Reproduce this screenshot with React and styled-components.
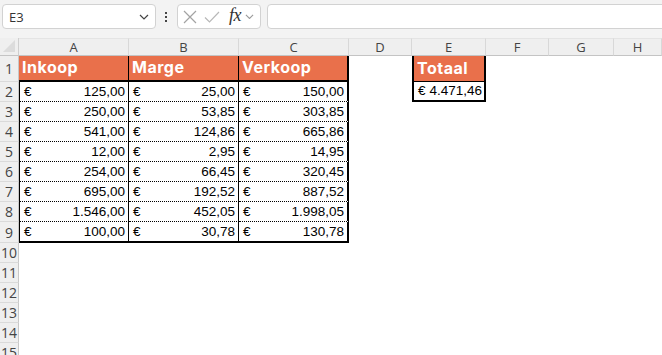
import React from 'react'
import styled, { createGlobalStyle } from 'styled-components'

const Global = createGlobalStyle`
  html, body { margin: 0; padding: 0; background: #fff; }
  body { font-family: "Liberation Sans", Arial, sans-serif; overflow: hidden; }
`

const Page = styled.div`
  width: 662px;
  height: 355px;
  overflow: hidden;
  background: #fff;
`

const Toolbar = styled.div`
  display: flex;
  align-items: flex-start;
  height: 38px;
  box-sizing: border-box;
  padding: 4px 0 0 2px;
  background: #f3f3f3;
  overflow: hidden;
`

const Box = styled.div`
  display: flex;
  align-items: center;
  height: 25px;
  box-sizing: border-box;
  background: #fff;
  border: 1px solid #d2d2d2;
  border-radius: 4px;
`

const NameBox = styled(Box)`
  width: 154px;
  justify-content: space-between;
  padding: 0 6px 0 6px;
  font-family: "Open Sans", sans-serif;
  font-size: 13px;
  color: #333;
`

const Dots = styled.div`
  display: flex;
  flex-direction: column;
  gap: 2px;
  margin: 8px 10px 0 9px;
  span {
    width: 2px;
    height: 2px;
    background: #444;
  }
`

const FxBox = styled(Box)`
  width: 84px;
  padding: 0 0 0 4px;
`

const Fx = styled.span`
  font-family: "Liberation Serif", serif;
  font-style: italic;
  font-size: 18px;
  color: #333;
  margin: -2px 4px 0 9px;
  letter-spacing: -0.5px;
`

const Input = styled(Box)`
  flex: 1;
  margin-left: 6px;
  margin-right: -10px;
`

const Sheet = styled.div`
  display: grid;
  grid-template-columns: 19px 110px 110px 110px 63px 74px 63px 65px 1fr;
  grid-template-rows: 18px 26px repeat(7, 20px) 21px repeat(6, 20px);
`

const Corner = styled.div`
  background: #efefef;
  border-right: 1px solid #cfcfcf;
  border-bottom: 1px solid #c4c4c4;
  position: relative;
  &::after {
    content: '';
    position: absolute;
    right: 3px;
    bottom: 3px;
    border-style: solid;
    border-width: 0 0 12px 12px;
    border-color: transparent transparent #dcdcdc transparent;
  }
`

const ColHead = styled.div`
  display: flex;
  align-items: center;
  justify-content: center;
  background: #efefef;
  border-right: 1px solid #d8d8d8;
  border-bottom: 1px solid #c4c4c4;
  border-top: 1px solid #e4e4e4;
  font-family: "Open Sans", sans-serif;
  font-size: 13px;
  color: #444;
`

const RowHead = styled.div`
  display: flex;
  align-items: center;
  justify-content: center;
  background: #efefef;
  border-right: 1px solid #c8c8c8;
  border-bottom: 1px solid #dadada;
  font-family: "Open Sans", sans-serif;
  font-size: 14px;
  color: #444;
  white-space: nowrap;
`

const Blank = styled.div`
  background: #fff;
`

const HeadCell = styled.div`
  display: flex;
  align-items: flex-end;
  padding: 0 0 3px 3px;
  background: #e9704b;
  color: #fff;
  font-family: Inter, "Noto Sans", sans-serif;
  font-weight: 700;
  font-size: 16px;
  letter-spacing: 0.5px;
  border-bottom: ${p => (p.$boxed ? '1px' : '2px')} solid #000;
  border-right: ${p => (p.$edge ? '2px' : '1px')} solid #000;
  border-left: ${p => (p.$boxed ? '2px solid #000' : 'none')};
`

const Money = styled.div`
  display: flex;
  justify-content: space-between;
  align-items: flex-end;
  padding: 0 3px 2px 4px;
  font-size: 13.5px;
  color: #000;
  white-space: nowrap;
  border-bottom: ${p => (p.$last ? '2px solid #000' : '1px dotted #000')};
  border-right: ${p => (p.$edge ? '2px' : '1px')} solid #000;
  border-left: ${p => (p.$first ? '1px solid #000' : 'none')};
`

const Total = styled(Money)`
  justify-content: flex-start;
  gap: 4px;
  padding-left: 4px;
  border: 2px solid #000;
  border-top: none;
`

const cols = ['A', 'B', 'C', 'D', 'E', 'F', 'G', 'H']

const data = [
  ['125,00', '25,00', '150,00'],
  ['250,00', '53,85', '303,85'],
  ['541,00', '124,86', '665,86'],
  ['12,00', '2,95', '14,95'],
  ['254,00', '66,45', '320,45'],
  ['695,00', '192,52', '887,52'],
  ['1.546,00', '452,05', '1.998,05'],
  ['100,00', '30,78', '130,78'],
]

const Chevron = ({ color, size = 10 }) => (
  <svg width={size} height={size * 0.6} viewBox="0 0 10 6">
    <path d="M1 1 L5 5 L9 1" fill="none" stroke={color} strokeWidth="1.2" />
  </svg>
)

function App() {
  return (
    <Page>
      <Global />
      <Toolbar>
        <NameBox>
          <span>E3</span>
          <Chevron color="#444" />
        </NameBox>
        <Dots>
          <span />
          <span />
          <span />
        </Dots>
        <FxBox>
          <svg width="14" height="14" viewBox="0 0 14 14" style={{ marginLeft: 1 }}>
            <path d="M1 1 L13 13 M13 1 L1 13" stroke="#a3a3a3" strokeWidth="1.2" />
          </svg>
          <svg width="16" height="14" viewBox="0 0 16 14" style={{ marginLeft: 7 }}>
            <path d="M1 7.5 L5.5 12 L15 2" fill="none" stroke="#b8b8b8" strokeWidth="1.2" />
          </svg>
          <Fx>fx</Fx>
          <Chevron color="#9a9a9a" size={9} />
        </FxBox>
        <Input />
      </Toolbar>
      <Sheet>
        <Corner />
        {cols.map(c => (
          <ColHead key={c}>{c}</ColHead>
        ))}

        <RowHead>1</RowHead>
        <HeadCell>Inkoop</HeadCell>
        <HeadCell>Marge</HeadCell>
        <HeadCell $edge>Verkoop</HeadCell>
        <Blank />
        <HeadCell $boxed $edge>Totaal</HeadCell>
        <Blank />
        <Blank />
        <Blank />

        {data.map((row, i) => (
          <React.Fragment key={i}>
            <RowHead>{i + 2}</RowHead>
            {row.map((v, j) => (
              <Money key={j} $first={j === 0} $edge={j === 2} $last={i === data.length - 1}>
                <span>€</span>
                <span>{v}</span>
              </Money>
            ))}
            <Blank />
            {i === 0 ? (
              <Total>
                <span>€</span>
                <span>4.471,46</span>
              </Total>
            ) : (
              <Blank />
            )}
            <Blank />
            <Blank />
            <Blank />
          </React.Fragment>
        ))}

        {[10, 11, 12, 13, 14, 15].map(n => (
          <React.Fragment key={n}>
            <RowHead>{n}</RowHead>
            {cols.map(c => (
              <Blank key={c} />
            ))}
          </React.Fragment>
        ))}
      </Sheet>
    </Page>
  )
}

export default App
